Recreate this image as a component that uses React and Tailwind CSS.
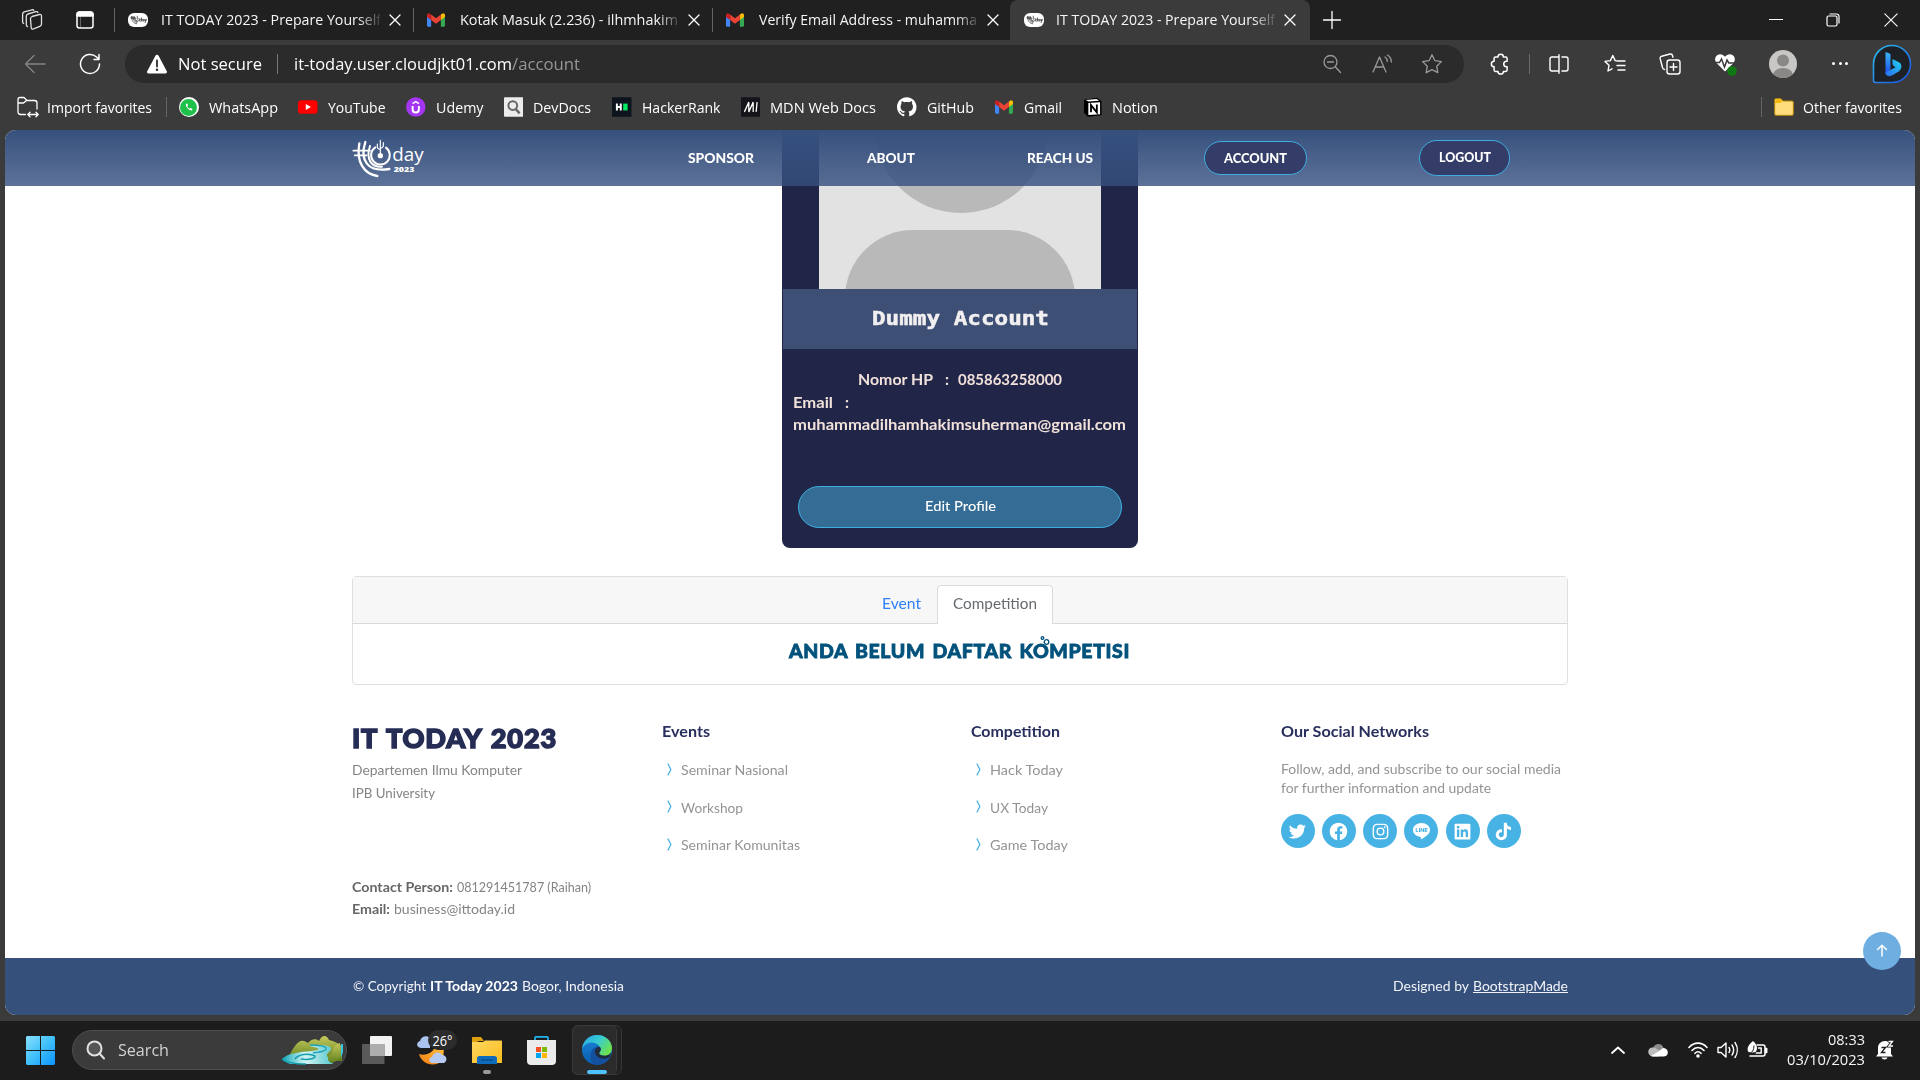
import React, { useLayoutEffect, useRef, useState } from "react";
import { BsLine, BsGithub } from "react-icons/bs";
import {
  BiLogoTwitter,
  BiLogoFacebookCircle,
  BiLogoInstagram,
  BiLogoLinkedinSquare,
  BiLogoTiktok,
} from "react-icons/bi";

const UI = "font-['Open_Sans','Noto_Sans',sans-serif]";
const SITE = "font-['Lato',sans-serif]";

/* A single line of text scaled horizontally to fill a given width. */
function Fit({ w, className = "", inner = "", children }) {
  const ref = useRef(null);
  const [scale, setScale] = useState(1);
  useLayoutEffect(() => {
    const natural = ref.current.offsetWidth;
    if (natural) setScale((w / ref.current.getBoundingClientRect().width) * scale);
  }, [w]);
  return (
    <span className={"block shrink-0 whitespace-nowrap " + className} style={{ width: w }}>
      <span ref={ref} className={"inline-block origin-left " + inner} style={{ transform: `scaleX(${scale})` }}>
        {children}
      </span>
    </span>
  );
}

function Svg({ className, box = "0 0 20 20", children, sw = 1.3 }) {
  return (
    <svg
      viewBox={box}
      className={"block shrink-0 " + className}
      fill="none"
      stroke="currentColor"
      strokeWidth={sw}
      strokeLinecap="round"
      strokeLinejoin="round"
    >
      {children}
    </svg>
  );
}

function GmailIcon({ className }) {
  return (
    <svg viewBox="0 0 24 18" className={"block shrink-0 " + className}>
      <path d="M0 3v13.4C0 17.3.7 18 1.6 18H5.500V7.500z" fill="#4285f4" />
      <path d="M24 3v13.400c0 .9-.7 1.600-1.600 1.600H18.500V7.500z" fill="#34a853" />
      <path d="M18.500 1.800V9L24 4.900V2.600C24 .2 21.300-.8 19.600.900z" fill="#fbbc04" />
      <path d="M5.500 9V1.800L12 6.700l6.500-4.900V9L12 13.900z" fill="#ea4335" />
      <path d="M0 2.600v2.300L5.500 9V1.800L4.400.900C2.700-.8 0 .2 0 2.600z" fill="#c5221f" />
    </svg>
  );
}

function TodayFavicon({ className }) {
  return (
    <svg viewBox="0 0 20 14" className={"block shrink-0 " + className}>
      <rect width="20" height="14" rx="6" fill="#fff" />
      <g stroke="#444" fill="none" strokeWidth="0.8">
        <path d="M3.500 3c0 4.500 1.800 7.300 5.500 7.800M4.800 3c0 3.700 1.500 6 4.500 6.500M6.200 3c-.2 3 1 5 3.300 5.300M2.500 4.500h5M2.800 5.600h4" />
        <path d="M7.800 5a2 2 0 103 0M9.300 2.800v4" />
        <circle cx="12.400" cy="7.200" r="1" />
        <path d="M13.500 4.500v3.800" />
        <circle cx="15" cy="7.200" r=".9" />
        <path d="M16 6v2.300M16.800 6l.7 2 .8-2-1.300 4" />
      </g>
    </svg>
  );
}

function Close() {
  return (
    <Svg box="0 0 12 12" className="h-3 w-3 text-white" sw={1.3}>
      <path d="M1 1l10 10M11 1L1 11" />
    </Svg>
  );
}

function Tab({ icon, title, w, active, className = "" }) {
  return (
    <div
      className={
        "flex h-10 shrink-0 items-center pl-[14px] " +
        (active ? "rounded-t-lg bg-[#3b3b3b] " : "") +
        className
      }
    >
      <div className="w-[32px]">{icon}</div>
      <div className="w-[219px] overflow-hidden pb-0.5 [mask-image:linear-gradient(90deg,#000_90%,#0002)]">
        <Fit w={w} className="text-[15px] leading-6 text-[#f5f5f5]">{title}</Fit>
      </div>
      <div className="ml-[9px]"><Close /></div>
    </div>
  );
}

function TabStrip() {
  return (
    <div className="flex h-10 items-center bg-[#202020]">
      <Svg box="0 0 22 22" className="ml-[21px] h-[22px] w-[22px] text-[#e0e0e0]">
        <path d="M11 7.500l7.500-2c1.300-.3 2 .3 2 1.500v8c0 1.200-.6 1.900-1.700 2.300l-6.300 2.600c-1.400.5-2.300 0-2.300-1.300L9.500 10c0-1.300.4-2.100 1.500-2.500z" />
        <path d="M6.500 17.500c-.8-.2-1.200-.8-1.200-1.700V7.300c0-1.200.5-1.900 1.600-2.300L15 2.700c1-.2 1.700 0 2 .8" />
        <path d="M2.600 14.500c-.7-.3-1-.8-1-1.600V5.200c0-1.200.5-1.900 1.600-2.300L11 .8c.9-.2 1.500 0 1.800.6" />
      </Svg>
      <Svg box="0 0 18 18" className="ml-[33px] h-[18px] w-[18px] text-white" sw={1.5}>
        <rect x="1" y="1" width="16" height="16" rx="2.500" />
        <path d="M1 5V3.500A2.500 2.500 0 013.500 1h11A2.500 2.500 0 0117 3.500V5z" fill="currentColor" />
        <path d="M4.500 6v10" strokeWidth=".6" opacity=".5" />
      </Svg>
      <div className="ml-5 h-6 w-px bg-[#666]" />
      <Tab w={220} className="w-[298px]" icon={<TodayFavicon className="-ml-px h-[14px] w-5" />} title="IT TODAY 2023 - Prepare Yourself" />
      <div className="h-6 w-px bg-[#666]" />
      <Tab w={218} className="w-[298px]" icon={<GmailIcon className="-ml-px h-[14px] w-[18px]" />} title="Kotak Masuk (2.236) - ilhmhakim" />
      <div className="h-6 w-px bg-[#666]" />
      <Tab w={218} className="w-[297px]" icon={<GmailIcon className="-ml-px h-[14px] w-[18px]" />} title="Verify Email Address - muhamma" />
      <Tab active w={219} className="w-[300px]" icon={<TodayFavicon className="h-[14px] w-5" />} title="IT TODAY 2023 - Prepare Yourself" />
      <Svg className="ml-[12px] h-5 w-5 text-white" sw={1.3}><path d="M10 1.500v17M1.500 10h17" /></Svg>
      <div className="ml-auto flex items-center pr-[22px] text-white">
        <Svg box="0 0 14 14" className="h-[14px] w-[14px]" sw={1.2}><path d="M.5 6.500h13" /></Svg>
        <Svg box="0 0 14 14" className="ml-[43px] h-[14px] w-[14px]" sw={1.2}>
          <rect x="1" y="3" width="10" height="10" rx="1.500" />
          <path d="M4 1h6.500A2.500 2.500 0 0113 3.500V10" />
        </Svg>
        <Svg box="0 0 14 14" className="ml-[44px] h-[14px] w-[14px]" sw={1.1}><path d="M.8.8l12.400 12.400M13.200.8L.8 13.200" /></Svg>
      </div>
    </div>
  );
}

function BingIcon() {
  return (
    <svg viewBox="0 0 40 40" className="block h-10 w-10 shrink-0">
      <defs>
        <linearGradient id="bingRing" x1="0" y1="0" x2="1" y2="1">
          <stop offset="0" stopColor="#2cc3f0" /><stop offset="1" stopColor="#1b4ee0" />
        </linearGradient>
        <linearGradient id="bingB" x1="0" y1="0" x2="0" y2="1">
          <stop offset="0" stopColor="#3ab8f5" /><stop offset="1" stopColor="#1d49e8" />
        </linearGradient>
        <linearGradient id="bingC" x1="1" y1="0" x2="0" y2="1">
          <stop offset="0" stopColor="#22d3ee" /><stop offset="1" stopColor="#2a6df0" />
        </linearGradient>
      </defs>
      <path d="M20 1.500A18.500 18.500 0 11 20 38.500H3.500C2 38.500 1.400 37.600 1.500 36V20A18.500 18.500 0 0120 1.500z" fill="#1d2024" stroke="url(#bingRing)" strokeWidth="1.600" />
      <path d="M13.500 8l4 1.500c.7.200 1 .7 1 1.400V25l-5 5.500z" fill="url(#bingB)" />
      <path d="M20.500 15l6.500 3.300c2 1.100 3 3.500 2 6.200-1 2.500-4 4-6.500 5.500-3 2-5.500 2.800-7.500 1.600-1.300-.8-1.500-2-1.500-3.300l6.500-3.300 3.500-1.500-2-1.700c-.5-.4-.8-.9-1-1.500z" fill="url(#bingC)" />
    </svg>
  );
}

function Toolbar() {
  return (
    <div className="flex h-12 items-center bg-[#3b3b3b] pb-px">
      <Svg box="0 0 22 20" className="ml-[24px] h-5 w-[22px] text-[#858585]"><path d="M21 10H1.500M10 1.500L1.500 10l8.500 8.500" /></Svg>
      <Svg box="0 0 22 22" className="ml-[33px] h-[22px] w-[22px] text-white" sw={1.5}>
        <path d="M20.500 11A9.500 9.500 0 1117.500 4L20 6.300M20 1.500v5h-5" />
      </Svg>
      <div className="ml-[24px] flex h-[38px] w-[1339px] shrink-0 items-center rounded-full bg-[#2b2b2b] text-white">
        <svg viewBox="0 0 22 20" className="ml-[21px] h-5 w-[22px]">
          <path d="M11 .8c.7 0 1.300.4 1.600 1l8.200 15.400c.6 1.100-.1 2.300-1.400 2.300H2.600c-1.300 0-2-1.200-1.400-2.300L9.400 1.800c.3-.6.9-1 1.600-1z" fill="#fff" />
          <path d="M11 6.500v6" stroke="#2b2b2b" strokeWidth="1.800" strokeLinecap="round" />
          <circle cx="11" cy="15.800" r="1.200" fill="#2b2b2b" />
        </svg>
        <Fit w={84} className="ml-[10px] text-[17px] leading-7">Not secure</Fit>
        <div className="ml-[15px] h-5 w-px bg-[#777]" />
        <Fit w={218} className="ml-[16px] text-[17px] leading-7">it-today.user.cloudjkt01.com</Fit>
        <Fit w={68} className="text-[17px] leading-7 text-[#969696]">/account</Fit>
        <div className="ml-auto flex items-center pr-[21px] text-[#9a9a9a]">
          <Svg className="h-[20px] w-[20px]"><circle cx="8.500" cy="8" r="6.500" /><path d="M13.500 13l5 5.500M5.500 8h6" /></Svg>
          <Svg className="ml-[30px] h-[20px] w-[21px]" box="0 0 21 20"><path d="M1 18L7.500 3 14 18M3.300 13h8.400M13 3c1.500 1 2.200 2.500 2.300 4.500M15.500 1c2.500 1.500 3.800 4 3.800 7" /></Svg>
          <Svg className="ml-[28px] h-[22px] w-[22px]" box="0 0 22 22"><path d="M11 1.800l2.900 5.900 6.500.900-4.700 4.600 1.100 6.500L11 16.700l-5.800 3 1.100-6.500L1.600 8.600l6.500-.9z" /></Svg>
        </div>
      </div>
      <div className="flex items-center text-white">
        <Svg className="ml-[25px] h-[22px] w-[22px]" box="0 0 22 22" sw={1.500}>
          <path d="M6.500 4H9a2.700 2.700 0 015.400 0h2.300c.9 0 1.400.5 1.400 1.400v2.800h-.6a2.700 2.700 0 000 5.500h.6V17c0 .9-.5 1.400-1.400 1.400h-2.300a2.700 2.700 0 01-5.400 0H6.500c-.9 0-1.400-.5-1.400-1.400v-3.300a2.700 2.700 0 010-5.500V5.400C5.100 4.500 5.600 4 6.500 4z" />
        </Svg>
        <div className="ml-[18px] h-5 w-px bg-[#6a6a6a]" />
        <Svg className="ml-[18px] h-5 w-[22px]" box="0 0 22 20" sw={1.400}>
          <path d="M8 3H4C2.700 3 2 3.700 2 5v10c0 1.300.7 2 2 2h4M14 3h4c1.300 0 2 .7 2 2v10c0 1.300-.7 2-2 2h-4M8 3h3M8 17h3M11 .8v18.400" />
        </Svg>
        <Svg className="ml-[34px] h-[22px] w-[22px]" box="0 0 22 22" sw={1.400}>
          <path d="M14 8h-.2L11.200 7.600 8.800 2.500 6.400 7.600 1 8.400l4 3.900-1 5.700 4-2.200M14 8h7M13 12.500h8M14 17h7" />
        </Svg>
        <Svg className="ml-[33px] h-[22px] w-[22px]" box="0 0 22 22" sw={1.400}>
          <rect x="8" y="7" width="13" height="14" rx="2.500" />
          <path d="M14.500 10.500v7M11 14h7M5.500 16.500c-1.200-.2-1.800-.8-2-2L1.200 5.700c-.3-1.300.2-2.100 1.500-2.500L11 1c1.400-.3 2.200.2 2.500 1.500l.4 1.700" />
        </Svg>
        <svg viewBox="0 0 24 24" className="ml-[33px] block h-6 w-6">
          <path d="M11 19.500L2.500 11C.2 8 1 4.500 3.500 3 6 1.500 9 2.200 11 4.800 13 2.200 16 1.500 18.500 3 21 4.500 21.800 8 19.500 11z" fill="#fff" />
          <path d="M0 10.500h5.500l2-3.500 3 8 2.500-7 1.800 3H22" stroke="#3b3b3b" strokeWidth="1.500" fill="none" />
          <circle cx="18" cy="19" r="4.800" fill="#107c10" />
          <path d="M16 19l1.500 1.500L20 17.500" stroke="#063" fill="none" />
        </svg>
        <svg viewBox="0 0 28 28" className="ml-[31px] block h-7 w-7">
          <defs><clipPath id="avatarClip"><circle cx="14" cy="14" r="14" /></clipPath></defs>
          <g clipPath="url(#avatarClip)">
            <rect width="28" height="28" fill="#c9c7c5" />
            <circle cx="14" cy="10.500" r="6" fill="#8a8886" />
            <ellipse cx="14" cy="25" rx="10" ry="7" fill="#8a8886" />
          </g>
        </svg>
        <div className="ml-[35px] flex gap-[3.500px]"><i className="h-[3px] w-[3px] rounded-full bg-white" /><i className="h-[3px] w-[3px] rounded-full bg-white" /><i className="h-[3px] w-[3px] rounded-full bg-white" /></div>
        <div className="ml-[24px]"><BingIcon /></div>
      </div>
    </div>
  );
}

const bookmarks = [
  { text: "WhatsApp", w: 69, icon: (
    <div className="flex h-5 w-5 items-center justify-center rounded-full bg-white">
      <div className="flex h-[17px] w-[17px] items-center justify-center rounded-full bg-[#1fc14b]"><svg viewBox="0 0 16 16" className="h-3 w-3"><path d="M5 3.200c-.7.200-1.300 1-1.200 2.200.3 2.700 3 6 6 7 1.300.4 2.400-.2 2.700-1.200.1-.5 0-.8-.4-1l-1.600-.8c-.4-.2-.6-.1-.9.200l-.6.8C7.500 9.800 6.200 8.500 5.700 7l.7-.8c.2-.3.2-.5.1-.8L5.800 3.700c-.2-.4-.4-.6-.8-.5z" fill="#fff" /></svg></div>
    </div>) },
  { text: "YouTube", w: 57.5, icon: (
    <svg viewBox="0 0 20 14" className="h-[14px] w-5"><rect width="20" height="14" rx="3.500" fill="#f00" /><path d="M8 4l5.300 3L8 10z" fill="#fff" /></svg>) },
  { text: "Udemy", w: 47.5, icon: (
    <svg viewBox="0 0 20 20" className="h-5 w-5"><circle cx="10" cy="10" r="10" fill="#a435f0" /><path d="M6.800 9v3.500a3.200 3.200 0 006.400 0V9" fill="none" stroke="#fff" strokeWidth="2" /><path d="M6.700 6.500L10 4.400l3.300 2.100" fill="none" stroke="#fff" strokeWidth="1.500" /></svg>) },
  { text: "DevDocs", w: 58, icon: (
    <svg viewBox="0 0 20 20" className="h-5 w-5"><rect width="20" height="20" rx="1" fill="#ececec" /><circle cx="9" cy="8.500" r="4.500" fill="none" stroke="#666" strokeWidth="2" /><path d="M12 12l4 4.500" stroke="#666" strokeWidth="2.500" /></svg>) },
  { text: "HackerRank", w: 78.5, icon: (
    <svg viewBox="0 0 20 20" className="h-5 w-5"><rect width="20" height="20" fill="#0e141e" /><path d="M5 6.500v7M9 6.500v7M5 10h4" stroke="#fff" strokeWidth="2" /><rect x="11.500" y="6.500" width="4.500" height="7" fill="#05ea63" /></svg>) },
  { text: "MDN Web Docs", w: 106, icon: (
    <svg viewBox="0 0 20 20" className="h-5 w-5"><rect width="20" height="20" fill="#15141a" /><path d="M3.500 15L8 5v10l4.500-10v10M16.500 5l-1 10" stroke="#fff" strokeWidth="1.300" fill="none" /></svg>) },
  { text: "GitHub", w: 47, icon: <BsGithub className="h-5 w-5 text-white" /> },
  { text: "Gmail", w: 38, icon: <GmailIcon className="h-[14px] w-[18px]" /> },
  { text: "Notion", w: 46, icon: (
    <svg viewBox="0 0 20 20" className="h-5 w-5"><path d="M1 2.500L14.500.5 19 4v14.500L5 20l-4-4z" fill="#000" /><path d="M3 2.800l11-1 2.500 1.800-11 .8z" fill="#fff" /><path d="M5.500 6l12-.8v12.300l-12 .8z" fill="#fff" /><path d="M8.200 15.500V8l6 7.500V7.500" stroke="#000" strokeWidth="1.900" fill="none" /></svg>) },
];

function Bookmarks() {
  return (
    <div className="flex h-[42px] items-center bg-[#3b3b3b] pb-1 text-[15px] leading-6 text-white">
      <Svg box="0 0 22 22" className="ml-[17px] h-[22px] w-[22px]" sw={1.3}>
        <path d="M8.500 18.500H3.500c-1.500 0-2.500-1-2.500-2.500V3.500C1 2.200 1.800 1.500 3 1.500h4l3 3h7.500c1.500 0 2.500 1 2.500 2.500v6M1 7h5.500l3-2.500M11 18.500h10M13 16.300l-2.200 2.200 2.200 2.200M19 16.300l2.200 2.200-2.200 2.200" />
      </Svg>
      <Fit w={105} className="ml-[8px]">Import favorites</Fit>
      <div className="mr-[12px] ml-[14px] h-5 w-px bg-[#666]" />
      <div className="flex gap-[20.800px]">
        {bookmarks.map((b) => (
          <div key={b.text} className="flex items-center gap-[10px]">
            <div className="flex w-[19.500px] justify-center">{b.icon}</div>
            <Fit w={b.w}>{b.text}</Fit>
          </div>
        ))}
      </div>
      <div className="ml-auto h-5 w-px bg-[#666]" />
      <svg viewBox="0 0 20 18" className="ml-[12px] h-[18px] w-5">
        <path d="M.7 2c0-.8.500-1.300 1.300-1.300h5L9 3h9c.8 0 1.300.5 1.300 1.300V16c0 .8-.5 1.300-1.300 1.300H2c-.8 0-1.300-.5-1.300-1.300z" fill="#ffdc7c" stroke="#b8860b" strokeWidth="1" />
        <path d="M1.200 1.200h5.500L8.500 3 6.500 5H1.200z" fill="#f2b90f" />
      </svg>
      <Fit w={99} className="mr-[18px] ml-[9px]">Other favorites</Fit>
    </div>
  );
}

function TodayLogo() {
  return (
    <svg viewBox="36 24 216 120" className="-ml-px block h-10 w-[72px] shrink-0" fill="none" stroke="#fff" strokeLinecap="round">
      <path d="M58 40C48 96 72 132 112 138" strokeWidth="7" />
      <path d="M76 36C58 92 84 128 148 117" strokeWidth="7" />
      <path d="M90 48C76 90 96 112 126 110" strokeWidth="6" />
      <path d="M106 52a28 28 0 1032 1" strokeWidth="6" />
      <path d="M40 62H90M44 76H80" strokeWidth="5" />
      <circle cx="121" cy="77" r="8" fill="#fff" stroke="none" />
      <path d="M121 76V31M112 42v9q0 5 9 8M130 38v9q0 5-9 8" strokeWidth="3.500" />
      <text x="157" y="93" textLength="94" lengthAdjust="spacingAndGlyphs" fill="#fff" stroke="none" fontFamily="Open Sans" fontWeight="400" fontSize="56">day</text>
      <text x="161" y="125" textLength="62" lengthAdjust="spacingAndGlyphs" fill="#fff" stroke="none" fontFamily="Open Sans" fontWeight="800" fontSize="22">2023</text>
    </svg>
  );
}

function SiteHeader() {
  return (
    <header className="absolute inset-x-0 top-0 flex h-14 items-center bg-gradient-to-b from-[#36517e] to-[#364f7fcc] pl-[348px] text-[14px] font-black text-white">
      <TodayLogo />
      <Fit w={66} className="ml-[264px] pb-0.5">SPONSOR</Fit>
      <Fit w={48} className="ml-[113px] pb-0.5">ABOUT</Fit>
      <Fit w={66} className="ml-[112px] pb-0.5">REACH US</Fit>
      <div className="ml-[111px] flex h-[34px] w-[103px] items-center justify-center rounded-full border border-[#3fade0] bg-[#343d67]">
        <Fit w={63} className="pb-px">ACCOUNT</Fit>
      </div>
      <div className="ml-[112px] flex h-9 w-[91px] items-center justify-center rounded-full border border-[#3fade0] bg-[#343d67]">
        <Fit w={52} className="pb-[3px]">LOGOUT</Fit>
      </div>
    </header>
  );
}

function ProfileCard() {
  return (
    <div className="mx-auto h-[418px] w-[356px] overflow-hidden rounded-b-lg bg-[#212648] px-px">
      <svg viewBox="0 0 282 159" className="mx-auto block h-[159px] w-[282px]">
        <rect width="282" height="159" fill="#e2e2e2" />
        <circle cx="142" cy="-4" r="87" fill="#b9b9b9" />
        <rect x="26" y="100" width="230" height="150" rx="68" fill="#b9b9b9" />
      </svg>
      <div className="flex h-[60px] items-center justify-center bg-[#3d4f74] font-['DejaVu_Sans_Mono',monospace] text-[19px] font-bold text-[#f2eff0] [-webkit-text-stroke:0.5px_#f2eff0]">
        <Fit w={177} className="pb-px">Dummy Account</Fit>
      </div>
      <div className="pt-[19px] text-[15px] leading-[22.500px] font-bold text-[#f1e1da]">
        <div className="flex pl-[75px]">
          <Fit w={75}>Nomor HP</Fit>
          <Fit w={4} className="ml-[12px]">:</Fit>
          <Fit w={104} className="ml-[9px]">085863258000</Fit>
        </div>
        <div className="flex pl-[10px]">
          <Fit w={40}>Email</Fit>
          <Fit w={4} className="ml-[12px]">:</Fit>
        </div>
        <Fit w={333} className="ml-[10px]">muhammadilhamhakimsuherman@gmail.com</Fit>
      </div>
      <div className="mx-auto mt-[50px] flex h-[42px] w-[324px] items-center justify-center rounded-full border border-[#3fade0] bg-[#356c95] text-[14px] text-white">
        <Fit w={71} className="pb-[3px] font-medium">Edit Profile</Fit>
      </div>
    </div>
  );
}

function TabsPanel() {
  return (
    <section className="relative -ml-px mt-[28px] h-[109px] w-[1216px] rounded border border-[#dfdfdf] bg-white">
      <div className="flex h-[47px] items-end border-b border-[#d9d9d9] bg-[#f7f7f7] pl-[529px] text-[15px]">
        <Fit w={39} className="pb-[9px] text-[#2f80f7]">Event</Fit>
        <div className="-mb-px ml-[16px] flex h-[39px] w-[116px] items-center justify-center rounded-t border border-b-0 border-[#dcdcdc] bg-white text-[#666b70]">
          <Fit w={84} className="pb-[3px]">Competition</Fit>
        </div>
      </div>
      <Fit w={341} className="mx-auto pt-[13px] text-[18.500px] leading-[28px] font-black text-[#01527c] [-webkit-text-stroke:0.8px_#01527c]" inner="tracking-[0.6px] [word-spacing:2px]">ANDA BELUM DAFTAR KOMPETISI</Fit>
      <svg viewBox="0 0 12 12" className="absolute top-[58px] left-[687px] h-3 w-3" fill="#fff" stroke="#01527c" strokeWidth="1.300">
        <circle cx="2.500" cy="3" r="1.300" /><circle cx="6.500" cy="7" r="2.300" />
      </svg>
    </section>
  );
}

function LinkColumn({ title, titleW, links, className }) {
  return (
    <div className={className}>
      <Fit w={titleW} className="text-[15px] leading-5 font-bold text-[#282f5c]">{title}</Fit>
      <ul className="mt-[17px] flex flex-col gap-[13.500px]">
        {links.map(([text, w]) => (
          <li key={text} className="flex items-center text-[13.500px] leading-6 text-[#949494]">
            <svg viewBox="0 0 5 14" className="mr-[9px] mb-0.5 ml-[5px] h-[13px] w-[5px]" fill="none" stroke="#47b2e4" strokeWidth="1.300"><path d="M.7.7L4 7 .7 13.300" /></svg>
            <Fit w={w}>{text}</Fit>
          </li>
        ))}
      </ul>
    </div>
  );
}

const socials = [BiLogoTwitter, BiLogoFacebookCircle, BiLogoInstagram, BsLine, BiLogoLinkedinSquare, BiLogoTiktok];

function FooterTop() {
  return (
    <div className="-ml-px flex pt-[36px] text-[13.500px] text-[#848484]">
      <div className="w-[310px] shrink-0 pt-px">
        <Fit w={205} className="text-[26.500px] leading-[32px] font-black text-[#262d55] [-webkit-text-stroke:1.500px_#262d55]" inner="tracking-[0.8px] [word-spacing:2px]">IT TODAY 2023</Fit>
        <Fit w={170} className="mt-[5px] leading-[23px]">Departemen Ilmu Komputer</Fit>
        <Fit w={83} className="leading-[23px]">IPB University</Fit>
        <div className="mt-[71px] flex leading-[22px]">
          <Fit w={101} className="font-bold text-[#666]">Contact Person:</Fit>
          <Fit w={134} className="ml-[4px]">081291451787 (Raihan)</Fit>
        </div>
        <div className="flex leading-[22px]">
          <Fit w={38} className="font-bold text-[#666]">Email:</Fit>
          <Fit w={121} className="ml-[4px]">business@ittoday.id</Fit>
        </div>
      </div>
      <LinkColumn className="w-[309px] shrink-0" title="Events" titleW={48} links={[["Seminar Nasional", 107], ["Workshop", 62], ["Seminar Komunitas", 119]]} />
      <LinkColumn className="w-[310px] shrink-0" title="Competition" titleW={89} links={[["Hack Today", 73], ["UX Today", 58], ["Game Today", 78]]} />
      <div className="text-[#949494]">
        <Fit w={148} className="text-[15px] leading-5 font-bold text-[#282f5c]">Our Social Networks</Fit>
        <Fit w={280} className="mt-[19px] leading-[19px]">Follow, add, and subscribe to our social media</Fit>
        <Fit w={210} className="leading-[19px]">for further information and update</Fit>
        <div className="mt-[16px] flex gap-[7.300px]">
          {socials.map((Icon, i) => (
            <div key={i} className="flex h-[34px] w-[34px] shrink-0 items-center justify-center rounded-full bg-[#47b2e4]">
              <Icon className={Icon === BsLine ? "h-[17px] w-[17px] text-white" : "h-[21px] w-[21px] text-white"} />
            </div>
          ))}
        </div>
      </div>
    </div>
  );
}

function Page() {
  return (
    <main className={"relative mx-[5px] flex h-[885px] flex-col overflow-hidden rounded-[11px] bg-white " + SITE}>
      <ProfileCard />
      <div className="mx-auto w-[1215px]">
        <TabsPanel />
        <FooterTop />
      </div>
      <footer className="mt-auto h-[57px] bg-[#36507c]">
        <div className="mx-auto flex h-full w-[1215px] items-center text-[13.500px] text-[#f1f3f7]">
          <Fit w={73}>© Copyright</Fit>
          <Fit w={88} className="ml-[4px] font-bold text-white">IT Today 2023</Fit>
          <Fit w={102} className="ml-[4px]">Bogor, Indonesia</Fit>
          <Fit w={76} className="ml-auto">Designed by</Fit>
          <Fit w={95} className="ml-[4px]" inner="underline underline-offset-1">BootstrapMade</Fit>
        </div>
      </footer>
      <SiteHeader />
      <button className="absolute right-[14px] bottom-[45px] flex h-[38px] w-[38px] items-center justify-center rounded-full bg-[#6faee0] pb-0.5">
        <Svg box="0 0 12 14" className="h-[13px] w-3 text-white" sw={1.600}><path d="M6 13V1.500M1.200 6L6 1.300 10.800 6" /></Svg>
      </button>
    </main>
  );
}

function SearchArt() {
  return (
    <svg viewBox="0 0 62 29" className="block h-[29px] w-[62px]">
      <defs>
        <linearGradient id="hill" x1="0" y1="0" x2="0" y2="1"><stop offset="0" stopColor="#c5c95c" /><stop offset="1" stopColor="#5f7f1c" /></linearGradient>
        <linearGradient id="river" x1="0" y1="0" x2="1" y2="0"><stop offset="0" stopColor="#0aa5b5" /><stop offset=".45" stopColor="#d5f4f4" /><stop offset="1" stopColor="#56c8cd" /></linearGradient>
      </defs>
      <path d="M7 20C11 12 15 6 19 5c3-.7 5 1 7 2 3-4 8-5 11-2 3-7 8-6 10-1 5 1 10 3 13 7v14H7z" fill="url(#hill)" />
      <path d="M28 9c8-1 20 0 21 3 1 3-5 5-4 8l6 8H8C4 26 1 25 0 23c6-6 18-7 29-8 6-.5 10-2 5-3.500-3-.5-6-1-6-2.500z" fill="url(#river)" />
      <path d="M28 9c8 0 17 1 16 4-1 3-8 3-13 4" fill="none" stroke="#169fb4" strokeWidth="1.300" />
      <path d="M13 23c3-5 14-6 20-3 1 3-8 4-14 3M0 23c3 3 12 5 24 5" fill="none" stroke="#149fae" strokeWidth="1.500" />
      <path d="M49 27c-5-3-3-8 1-9 1-7 3-9 8-11l1 12c-2 4-5 7-10 8z" fill="url(#hill)" />
      <path d="M59 8h2v8l-2 6z" fill="#36c6e8" />
    </svg>
  );
}

function EdgeIcon() {
  return (
    <svg viewBox="0 0 30 30" className="block h-[30px] w-[30px]">
      <defs>
        <linearGradient id="edgeTop" x1="0" y1="0" x2="1" y2=".6"><stop offset="0" stopColor="#2b9fe0" /><stop offset=".5" stopColor="#36cbd6" /><stop offset="1" stopColor="#6be24e" /></linearGradient>
        <linearGradient id="edgeSide" x1="0" y1="0" x2="0" y2="1"><stop offset="0" stopColor="#1b86d8" /><stop offset="1" stopColor="#0b5cae" /></linearGradient>
      </defs>
      <circle cx="15" cy="15" r="15" fill="url(#edgeSide)" />
      <path d="M28.500 21C25 27 20 30 15 30c-4 0-6.500-4-6.500-9 0-5.500 3-8.500 7-9.500l4 1-2.500 5c0 4 6 6 11.500 3.500z" fill="#13509f" />
      <path d="M.1 14C1 5 8 0 15 0c9 0 15 6.500 15 13 0 5-3.500 7.800-7.500 7.800-3 0-5.300-1-5.300-2.500 0-1 1.500-1.700 1.500-4C18.700 10.500 14 7.500 9.500 7.500 5 7.500 1.500 10.500.1 14z" fill="url(#edgeTop)" />
      <path d="M13 16.500c0-3 2-4.500 4-4.500 1.500 0 2 1 1.800 2.500-.2 2-1.600 2.700-1.600 3.800 0 1.500 2.300 2.500 5.300 2.500 3 0 5-1.200 6.300-3 0 2-.5 3.500-1.500 4.500-5 3-14.300 1-14.300-5.800z" fill="#222b3a" />
    </svg>
  );
}

function Taskbar() {
  return (
    <div className="flex h-[60px] items-center border-t border-[#3d3d3d] bg-[#1c1c1c] pb-px text-white">
      <svg viewBox="0 0 29 29" className="ml-[26px] block h-[29px] w-[29px] shrink-0">
        <defs><linearGradient id="winGrad" x1="0" y1="0" x2="1" y2="1"><stop offset="0" stopColor="#8ae0fd" /><stop offset=".5" stopColor="#40c0fb" /><stop offset="1" stopColor="#0a93fb" /></linearGradient></defs>
        <path d="M1 0h13v14H0V1zM15 0h13l1 1v13H15zM0 15h14v14H1l-1-1zM15 15h14v13l-1 1H15z" fill="url(#winGrad)" />
      </svg>
      <div className="ml-[17px] flex h-10 w-[275px] shrink-0 items-center rounded-full border border-[#4e4e4e] bg-[#3b3b3b]">
        <Svg box="0 0 20 20" className="ml-[13px] h-5 w-5 text-[#e2e2e2]" sw={2}><circle cx="8.500" cy="8.500" r="7" fill="#555" /><path d="M13.500 13.500l4.500 5" /></Svg>
        <Fit w={51} className="ml-[12px] text-[16.500px] leading-6 text-[#d2d2d2]">Search</Fit>
        <div className="ml-auto pr-[2px]"><SearchArt /></div>
      </div>
      <svg viewBox="0 0 30 28" className="ml-[15px] block h-7 w-[30px] shrink-0">
        <rect x="8" y="0" width="22" height="20" rx="1" fill="#f2f2f2" />
        <rect x="0" y="8" width="22.500" height="20" rx="1" fill="#5a5a5a" />
        <path d="M8 8h14.500v12H8z" fill="#adadad" />
      </svg>
      <svg viewBox="0 0 40 36" className="-mt-1 ml-[25px] block h-9 w-10 shrink-0">
        <defs><linearGradient id="moon" x1="0" y1="1" x2="1" y2="0"><stop offset="0" stopColor="#f27a12" /><stop offset="1" stopColor="#fcc13c" /></linearGradient></defs>
        <path d="M4 18C-1 18-1 12 3 11 4 6 10 5 13 8v10z" fill="#a9c2ee" />
        <path d="M2 24c6 2 14-1 15-6h10l-1 12c-8 8-21 5-24-6z" fill="url(#moon)" />
        <path d="M15 33c-4-1-3-6 0-6 1-5 8-6 10-2 5 0 6 6 2 8z" fill="#b5cbf3" />
        <rect x="11" y="0" width="29" height="20" rx="10" fill="#2c2c2c" />
        <text x="15.500" y="15.500" fill="#fff" fontFamily="Open Sans" fontSize="14.500" textLength="20" lengthAdjust="spacingAndGlyphs">26°</text>
      </svg>
      <div className="relative ml-[15px] shrink-0">
        <svg viewBox="0 0 30 27" className="block h-[27px] w-[30px]">
          <defs><linearGradient id="folder" x1="0" y1="0" x2="1" y2="1"><stop offset="0" stopColor="#ffd75e" /><stop offset="1" stopColor="#fbbd20" /></linearGradient></defs>
          <path d="M0 1c0-.6.400-1 1-1h8l3 4h-5l-7 3z" fill="#dfa00e" />
          <path d="M0 5h11l2-1.500h16c.6 0 1 .4 1 1V26H0z" fill="url(#folder)" />
          <path d="M5 27v-5.500c0-1.500 1-2.500 2.500-2.500h15c1.500 0 2.500 1 2.500 2.500V27z" fill="#0f6cbd" />
          <path d="M9 23h12" stroke="#0a4a86" strokeWidth="1.300" />
        </svg>
        <div className="absolute -bottom-[10px] left-[11px] h-1 w-2 rounded-full bg-[#9a9a9a]" />
      </div>
      <svg viewBox="0 0 29 29" className="ml-[25px] block h-[29px] w-[29px] shrink-0">
        <path d="M8 6V2c0-.8.400-1.200 1.200-1.200h10.600c.8 0 1.200.4 1.200 1.200v4" fill="none" stroke="#22b4ee" strokeWidth="1.700" />
        <path d="M0 4h29v21c0 2.500-1.500 4-4 4H4c-2.500 0-4-1.500-4-4z" fill="#ebebeb" />
        <path d="M9 11h5v5H9z" fill="#f25022" /><path d="M15 11h5v5h-5z" fill="#7fba00" /><path d="M9 17h5v5H9z" fill="#00a4ef" /><path d="M15 17h5v5h-5z" fill="#ffb900" />
      </svg>
      <div className="ml-[16px] h-[50px] w-[50px] shrink-0 rounded-[6px] border border-[#363636] bg-[#222]">
        <div className="-mt-px -ml-px flex h-[50px] w-[45px] flex-col items-center rounded-[6px] border border-[#3a3a3a] bg-[#2b2b2b] pt-[9px] pl-1">
          <EdgeIcon />
          <div className="mt-[5px] h-1 w-5 rounded-full bg-[#4cc2ff]" />
        </div>
      </div>
      <div className="ml-auto flex items-center pr-[26px] pb-px">
        <Svg box="0 0 14 8" className="h-2 w-[14px]" sw={1.800}><path d="M1 7l6-5.500L13 7" /></Svg>
        <svg viewBox="0 0 20 14" className="ml-[23px] block h-[14px] w-5"><path d="M5 5C7-.5 14-.5 15.500 5l-4 3z" fill="#8d8d8d" /><path d="M4 13.500C-1 12-1 5.500 4 4.500c2-.3 4 .5 5 1.500l7 5-6 2.500z" fill="#bdbdbd" /><path d="M3 13c4-2 8-5 12-8 6 0 6.500 8 1 8.500H5z" fill="#fff" /></svg>
        <Svg box="0 0 20 16" className="ml-[20px] h-4 w-5" sw={1.600}>
          <path d="M1 5.500C6-.3 14-.3 19 5.500M4 8.500c3.500-4 8.500-4 12 0M7 11.300c1.800-2 4.200-2 6 0" /><circle cx="10" cy="14" r="1" fill="currentColor" />
        </Svg>
        <Svg box="0 0 21 18" className="ml-[9px] h-[18px] w-[21px]" sw={1.400}>
          <path d="M1 6.500h3L9 2v14l-5-4.500H1zM12 6.500c1 1.500 1 3.500 0 5M15 4c2 3 2 7 0 10M18 1.500c3 4.500 3 10.500 0 15" />
        </Svg>
        <Svg box="0 0 21 17" className="ml-[9px] h-[17px] w-[21px]" sw={1.500}>
          <path d="M10 4h6c1 0 2 .8 2 2v7c0 1.200-1 2-2 2H3" />
          <path d="M18.500 7.500h1.200v4h-1.200z" fill="#fff" />
          <path d="M6 0c4 3.500 5 7 3 10.500-2 1.300-6 1.300-8 0C-.5 6.500 2 3.500 6 0z" fill="#fff" stroke="none" />
          <path d="M11.500 7h2.700v5h-5" stroke="#fff" strokeWidth="1.400" /><path d="M7 5C7 9 5.500 11 2.500 13" stroke="#1c1c1c" strokeWidth="1" />
        </Svg>
        <div className="ml-[19px] flex w-[78px] flex-col items-end pb-px text-[15px] leading-5 text-[#f5f5f5]">
          <Fit w={37}>08:33</Fit>
          <Fit w={78}>03/10/2023</Fit>
        </div>
        <svg viewBox="0 0 18 20" className="ml-[11px] block h-5 w-[18px]">
          <path d="M2 14V8c0-4 3-7 7-7 3.500 0 6 2.500 6 6v7l2 2.500H0z" fill="#fff" /><path d="M5.500 17.500h6c-.5 2.500-5.500 2.500-6 0z" fill="#fff" />
          <path d="M5.500 7.500h4l-4 5h4" fill="none" stroke="#1c1c1c" strokeWidth="1.300" /><path d="M12.500 1.500h4l-3.500 4.500h4" fill="none" stroke="#1c1c1c" strokeWidth="3" /><path d="M12.500 1.500h4l-3.500 4.500h4" fill="none" stroke="#fff" strokeWidth="1.300" />
        </svg>
      </div>
    </div>
  );
}

export default function App() {
  return (
    <div className={"flex h-[1080px] w-[1920px] flex-col overflow-hidden bg-[#3b3b3b] " + UI}>
      <TabStrip />
      <Toolbar />
      <Bookmarks />
      <Page />
      <div className="h-[5px]" />
      <Taskbar />
    </div>
  );
}
